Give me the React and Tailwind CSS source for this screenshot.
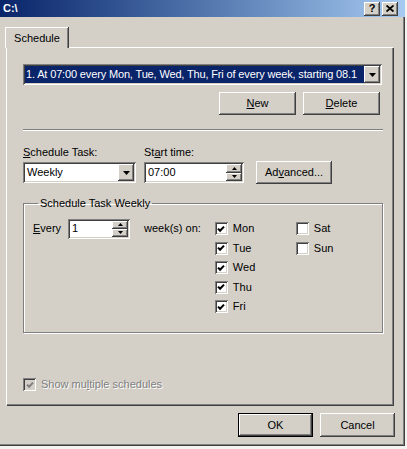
import React from "react";

// classic 3D bevels
const raised =
  "shadow-[inset_-1px_-1px_#404040,inset_1px_1px_#ffffff,inset_-2px_-2px_#808080,inset_2px_2px_#d4d0c8]";
const sunken =
  "shadow-[inset_1px_1px_#808080,inset_-1px_-1px_#ffffff,inset_2px_2px_#404040,inset_-2px_-2px_#d4d0c8]";

function Ul({ children }) {
  return <span className="underline underline-offset-[1px]">{children}</span>;
}

function PushButton({ children, className = "", isDefault = false }) {
  return (
    <div
      className={`flex items-center justify-center bg-[#d4d0c8] text-black ${
        isDefault ? "border border-black" : ""
      } ${className}`}
    >
      <div className={`flex h-full w-full items-center justify-center ${raised}`}>{children}</div>
    </div>
  );
}

function ArrowDown({ w = 7, h = 4 }) {
  return (
    <svg width={w} height={h} viewBox="0 0 7 4">
      <path d="M0 0 H7 L3.5 4 Z" fill="#000" />
    </svg>
  );
}

function ArrowUp() {
  return (
    <svg width="5" height="3" viewBox="0 0 5 3">
      <path d="M0 3 H5 L2.5 0 Z" fill="#000" />
    </svg>
  );
}

function DropButton() {
  return (
    <div className={`flex h-full w-[16px] shrink-0 items-center justify-center bg-[#d4d0c8] ${raised}`}>
      <ArrowDown />
    </div>
  );
}

function Spinner() {
  return (
    <div className="flex h-full w-[16px] shrink-0 flex-col">
      <div className={`flex flex-1 items-center justify-center bg-[#d4d0c8] ${raised}`}>
        <ArrowUp />
      </div>
      <div className={`flex flex-1 items-center justify-center bg-[#d4d0c8] ${raised}`}>
        <svg width="5" height="3" viewBox="0 0 5 3">
          <path d="M0 0 H5 L2.5 3 Z" fill="#000" />
        </svg>
      </div>
    </div>
  );
}

function CheckBox({ checked = false, disabled = false }) {
  return (
    <div
      className={`flex h-[13px] w-[13px] shrink-0 items-center justify-center ${sunken} ${
        disabled ? "bg-[#d4d0c8]" : "bg-white"
      }`}
    >
      {checked && (
        <svg width="8" height="8" viewBox="0 0 8 8">
          <path
            d="M1 3.6 L3.1 5.8 L7 1.6"
            fill="none"
            stroke={disabled ? "#808080" : "#000"}
            strokeWidth="2"
          />
        </svg>
      )}
    </div>
  );
}

function Day({ label, checked }) {
  return (
    <div className="flex h-[19.5px] items-center">
      <CheckBox checked={checked} />
      <span className="ml-[5px]">{label}</span>
    </div>
  );
}

export default function App() {
  return (
    <div className="h-[449px] w-[407px] overflow-hidden bg-[#f4f3f0] font-['Liberation_Sans',Arial,sans-serif] text-[11px] leading-[13px] text-black">
      <div className="flex h-[446px] w-[405px] flex-col bg-[#d4d0c8] shadow-[inset_-1px_-1px_#404040,inset_-2px_-2px_#808080]">
        {/* title bar */}
        <div className="flex h-[17px] items-center bg-gradient-to-r from-[#0a246a] to-[#a6caf0] pl-[3px] pr-[7px]">
          <span className="font-bold text-white">C:\</span>
          <div className="ml-auto flex gap-[2px]">
            <div className={`flex h-[14px] w-[16px] items-center justify-center bg-[#d4d0c8] font-bold ${raised}`}>
              ?
            </div>
            <div className={`flex h-[14px] w-[16px] items-center justify-center bg-[#d4d0c8] ${raised}`}>
              <svg width="8" height="7" viewBox="0 0 8 7">
                <path d="M0.5 0.5 L7.5 6.5 M7.5 0.5 L0.5 6.5" stroke="#000" strokeWidth="1.8" />
              </svg>
            </div>
          </div>
        </div>

        <div className="flex flex-col pl-[6px] pr-[12px] pt-[10px]">
          {/* tab strip */}
          <div className="relative z-10 -mb-px ml-[-1px] flex h-[21px] w-[63px] items-center justify-center border-l border-t border-white bg-[#d4d0c8] shadow-[inset_-1px_0_#808080,1px_0_#404040]">
            Schedule
          </div>

          {/* tab page */}
          <div className="flex h-[358px] flex-col border-l border-t border-white pl-[16px] pr-[10px] pt-[16px] shadow-[inset_-1px_-1px_#808080,1px_1px_#404040]">
            <div className={`flex h-[21px] w-[359px] items-center bg-white p-[2px] ${sunken}`}>
              <div className="flex h-full flex-1 items-center whitespace-nowrap bg-[#0a246a] pl-[1px] tracking-[-0.15px] text-white">
                1. At 07:00 every Mon, Tue, Wed, Thu, Fri of every week, starting 08.1
              </div>
              <DropButton />
            </div>

            <div className="mt-[7px] flex justify-end gap-[7px] pr-[3px]">
              <PushButton className="h-[23px] w-[77px]">
                <Ul>N</Ul>ew
              </PushButton>
              <PushButton className="h-[23px] w-[77px]">
                <Ul>D</Ul>elete
              </PushButton>
            </div>

            <div className="mt-[14px] h-[2px] border-b border-t border-b-white border-t-[#808080]" />

            <div className="mt-[15px] flex items-end">
              <div className="flex w-[113px] flex-col">
                <span>
                  <Ul>S</Ul>chedule Task:
                </span>
                <div className={`mt-[3px] flex h-[21px] items-center bg-white p-[2px] ${sunken}`}>
                  <span className="flex-1 pl-[2px]">Weekly</span>
                  <DropButton />
                </div>
              </div>
              <div className="ml-[8px] flex w-[100px] flex-col">
                <span>
                  St<Ul>a</Ul>rt time:
                </span>
                <div className={`mt-[3px] flex h-[21px] items-center bg-white p-[2px] ${sunken}`}>
                  <span className="flex-1 pl-[2px]">07:00</span>
                  <Spinner />
                </div>
              </div>
              <PushButton className="mb-[-1px] ml-[12px] h-[23px] w-[76px]">
                Ad<Ul>v</Ul>anced...
              </PushButton>
            </div>

            <fieldset className="mt-[14px] h-[136px] border border-[#808080] pl-[9px] shadow-[inset_1px_1px_#ffffff,1px_1px_#ffffff]">
              <legend className="ml-[5px] px-[2px]">Schedule Task Weekly</legend>
              <div className="mt-[9px] flex items-start">
                <div className="flex h-[19.5px] items-center">
                  <span className="w-[35px]">
                    <Ul>E</Ul>very
                  </span>
                  <div className={`flex h-[20px] w-[62px] items-center bg-white p-[2px] ${sunken}`}>
                    <span className="flex-1 pl-[2px]">1</span>
                    <Spinner />
                  </div>
                  <span className="ml-[14px]">week(s) on:</span>
                </div>
                <div className="ml-[14px] flex w-[81px] flex-col">
                  <Day label="Mon" checked />
                  <Day label="Tue" checked />
                  <Day label="Wed" checked />
                  <Day label="Thu" checked />
                  <Day label="Fri" checked />
                </div>
                <div className="flex flex-col">
                  <Day label="Sat" />
                  <Day label="Sun" />
                </div>
              </div>
            </fieldset>

            <div className="mt-[45px] flex items-center">
              <CheckBox checked disabled />
              <span className="ml-[5px] text-[#808080] [text-shadow:1px_1px_#ffffff]">
                Show mu<Ul>l</Ul>tiple schedules
              </span>
            </div>
          </div>

          <div className="mt-[8px] flex justify-end gap-[7px]">
            <PushButton className="h-[24px] w-[75px]" isDefault>
              OK
            </PushButton>
            <PushButton className="mr-[-2px] h-[24px] w-[75px]">Cancel</PushButton>
          </div>
        </div>
      </div>
    </div>
  );
}
